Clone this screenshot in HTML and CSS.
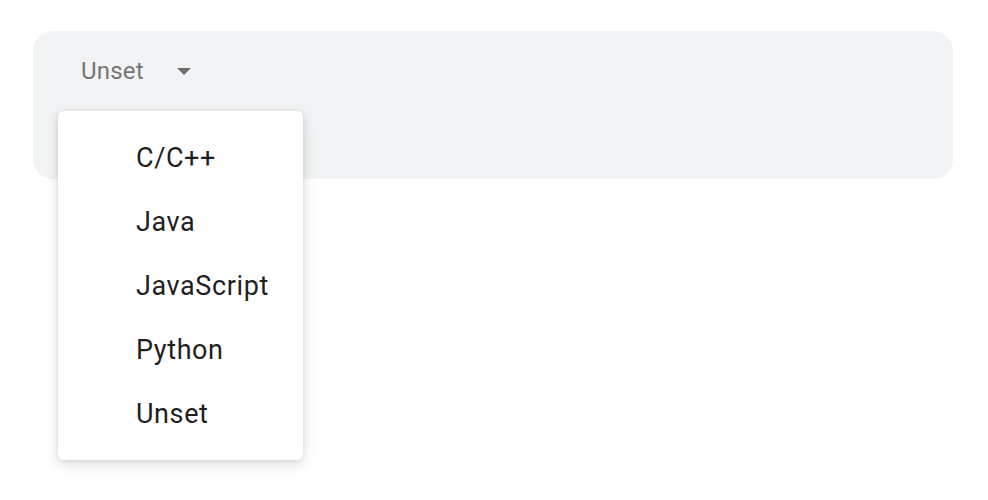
FILE: index.html
```html
<!DOCTYPE html>
<html>
<head>
<meta charset="utf-8">
<link rel="stylesheet" href="styles.css">
</head>
<body>
<div class="panel">
  <div class="select">
    <span class="value">Unset</span>
    <svg class="arrow" width="14" height="7" viewBox="0 0 14 7"><path d="M0 0 L14 0 L7 7 Z" fill="#6f6f6f"/></svg>
    <ul class="menu">
      <li>C/C++</li>
      <li>Java</li>
      <li>JavaScript</li>
      <li>Python</li>
      <li>Unset</li>
    </ul>
  </div>
</div>
</body>
</html>
```
FILE: styles.css
```css
html, body { margin: 0; padding: 0; background: #fff; }
body {
  font-family: Roboto, "Liberation Sans", sans-serif;
  padding: 31px 35px 0 33px;
  min-height: 500px;
  box-sizing: border-box;
}
.panel {
  background: #f1f3f4;
  border-radius: 20px;
  height: 148px;
  box-sizing: border-box;
  padding: 0 48px;
}
.select {
  position: relative;
  display: flex;
  align-items: center;
  height: 80px;
}
.value {
  font-size: 24px;
  color: #757575;
  letter-spacing: 0.2px;
}
.arrow {
  margin-left: 33px;
}
.menu {
  position: absolute;
  z-index: 10;
  left: -23px;
  top: 80px;
  width: 245px;
  height: 349px;
  box-sizing: border-box;
  margin: 0;
  padding: 15px 0 14px;
  list-style: none;
  background: #fff;
  border-radius: 6px;
  box-shadow: 0 4px 14px rgba(0,0,0,0.14), 0 1px 4px rgba(0,0,0,0.08);
}
.menu li {
  height: 64px;
  line-height: 64px;
  padding-left: 78px;
  font-size: 27px;
  letter-spacing: 0.6px;
  color: #1f1f1f;
}
```
